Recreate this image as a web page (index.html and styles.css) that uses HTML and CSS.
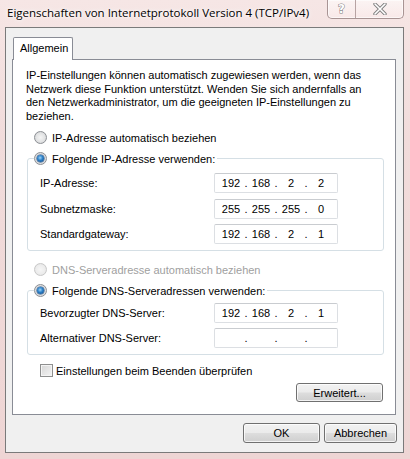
FILE: index.html
```html
<!DOCTYPE html>
<html lang="de">
<head>
<meta charset="utf-8">
<title>Eigenschaften von Internetprotokoll Version 4 (TCP/IPv4)</title>
<link rel="stylesheet" href="styles.css">
</head>
<body>
<div class="frame">
  <div class="titlebar">
    <span class="title">Eigenschaften von Internetprotokoll Version 4 (TCP/IPv4)</span>
    <div class="caption-btns">
      <span class="cbtn help">?</span>
      <span class="cbtn close"><svg width="14" height="12" viewBox="0 0 14 12"><path d="M2 1 L12 11 M12 1 L2 11" stroke="#7d7d7d" stroke-width="3.4" stroke-linecap="round"/><path d="M2 1 L12 11 M12 1 L2 11" stroke="#ffffff" stroke-width="1.6" stroke-linecap="round"/></svg></span>
    </div>
  </div>
  <div class="client">
    <div class="tabs"><div class="tab">Allgemein</div></div>
    <div class="panel">
      <p class="intro">IP-Einstellungen können automatisch zugewiesen werden, wenn das Netzwerk diese Funktion unterstützt. Wenden Sie sich andernfalls an den Netzwerkadministrator, um die geeigneten IP-Einstellungen zu beziehen.</p>

      <div class="opt opt-ip-auto"><span class="radio"></span><span>IP-Adresse automatisch beziehen</span></div>

      <div class="group group-ip">
        <div class="group-head"><span class="radio checked"></span><span>Folgende IP-Adresse verwenden:</span></div>
        <div class="field field-first"><span class="flabel">IP-Adresse:</span><span class="ipbox"><span>192</span><i>.</i><span>168</span><i>.</i><span>2</span><i>.</i><span>2</span></span></div>
        <div class="field"><span class="flabel">Subnetzmaske:</span><span class="ipbox"><span>255</span><i>.</i><span>255</span><i>.</i><span>255</span><i>.</i><span>0</span></span></div>
        <div class="field"><span class="flabel">Standardgateway:</span><span class="ipbox"><span>192</span><i>.</i><span>168</span><i>.</i><span>2</span><i>.</i><span>1</span></span></div>
      </div>

      <div class="opt opt-dns-auto disabled"><span class="radio"></span><span>DNS-Serveradresse automatisch beziehen</span></div>

      <div class="group group-dns">
        <div class="group-head"><span class="radio checked"></span><span>Folgende DNS-Serveradressen verwenden:</span></div>
        <div class="field field-first dns-first"><span class="flabel">Bevorzugter DNS-Server:</span><span class="ipbox"><span>192</span><i>.</i><span>168</span><i>.</i><span>2</span><i>.</i><span>1</span></span></div>
        <div class="field"><span class="flabel">Alternativer DNS-Server:</span><span class="ipbox"><span></span><i>.</i><span></span><i>.</i><span></span><i>.</i><span></span></span></div>
      </div>

      <div class="opt opt-check"><span class="checkbox"></span><span>Einstellungen beim Beenden überprüfen</span></div>

      <div class="adv-row"><button class="btn btn-adv">Erweitert...</button></div>
    </div>
    <div class="dlg-buttons">
      <button class="btn btn-ok">OK</button>
      <button class="btn btn-cancel">Abbrechen</button>
    </div>
  </div>
</div>
</body>
</html>
```

FILE: styles.css
```css
* { box-sizing: border-box; }
html, body { margin: 0; padding: 0; }
body {
  width: 410px;
  height: 459px;
  overflow: hidden;
  font-family: "Liberation Sans", Arial, sans-serif;
  font-size: 11px;
  color: #000;
}
.frame {
  width: 410px;
  height: 459px;
  background: linear-gradient(180deg, #f6e6e5 0%, #f1dcdb 30%, #eed5d4 100%);
  display: flex;
  flex-direction: column;
}
.titlebar {
  height: 27px;
  display: flex;
  align-items: flex-start;
  flex: none;
}
.title {
  flex: 1;
  padding: 5px 0 0 7px;
  font-family: "Open Sans", "Noto Sans", sans-serif;
  font-size: 11.5px;
  line-height: 16px;
  color: #000;
  text-shadow: 0 0 6px #fff, 0 0 3px #fff;
  white-space: nowrap;
}
.caption-btns {
  display: flex;
  margin-right: 6px;
  height: 19px;
  border: 1px solid #a89494;
  border-top: none;
  border-radius: 0 0 5px 5px;
  background: linear-gradient(180deg, rgba(255,255,255,0.55), rgba(255,240,240,0.35));
  box-shadow: inset 0 0 0 1px rgba(255,255,255,0.6);
}
.cbtn {
  display: flex;
  align-items: center;
  justify-content: center;
  height: 18px;
}
.help {
  width: 28px;
  border-right: 1px solid #b7a3a3;
  font-family: "DejaVu Sans", sans-serif;
  font-weight: bold;
  font-size: 12px;
  color: #fff;
  -webkit-text-stroke: 1px #7d7d7d;
  paint-order: stroke fill;
}
.close { width: 47px; }

.client {
  margin-left: 5px;
  width: 399px;
  height: 426px;
  background: #f0f0f0;
  border: 1px solid #7a7a7a;
  padding: 9px 0 0 6px;
  display: flex;
  flex-direction: column;
}
.tabs {
  display: flex;
  padding-left: 1px;
  height: 22px;
  flex: none;
}
.tab {
  width: 60px;
  height: 23px;
  border: 1px solid #898c95;
  border-bottom: none;
  border-radius: 2px 2px 0 0;
  background: #fff;
  padding: 3px 0 0 6px;
  line-height: 14px;
  position: relative;
  z-index: 1;
}
.panel {
  width: 384px;
  height: 356px;
  border: 1px solid #898c95;
  background: #fff;
  padding: 9px 11px 0 13px;
  display: flex;
  flex-direction: column;
  flex: none;
}
.intro {
  margin: 0;
  line-height: 13.5px;
  width: 340px;
}
.opt {
  display: flex;
  align-items: center;
  height: 17px;
  gap: 5px;
}
.opt-ip-auto { margin: 6px 0 0 8px; }
.opt-dns-auto { margin: 10px 0 0 8px; }
.opt-check { margin: 7px 0 0 14px; gap: 3px; }
.disabled { color: #a0a0a0; }

.radio {
  width: 13px;
  height: 13px;
  border-radius: 50%;
  border: 1px solid #8c8f94;
  background: radial-gradient(circle at 50% 50%, #f4f4f4 0%, #e2e3e4 55%, #c9cbcd 100%);
  flex: none;
  display: flex;
  align-items: center;
  justify-content: center;
}
.disabled .radio {
  border-color: #c8c8c8;
  background: radial-gradient(circle at 50% 50%, #f6f6f6 0%, #ececec 60%, #dcdcdc 100%);
}
.radio.checked::after {
  content: "";
  width: 7px;
  height: 7px;
  border-radius: 50%;
  background: radial-gradient(circle at 45% 40%, #9fd4f8 0%, #2a7fc7 45%, #0c3d78 100%);
  box-shadow: 0 0 0 0.5px #1d4c82;
}
.checkbox {
  width: 13px;
  height: 13px;
  border: 1px solid #8e8f8f;
  background: linear-gradient(135deg, #d6d6d6 0%, #f4f4f4 100%);
  box-shadow: inset 0 0 0 1px #f4f4f4;
  flex: none;
}

.group {
  margin: 12px 0 0 1px;
  border: 1px solid #d5dfe5;
  border-radius: 3px;
  padding: 0 0 6px 12px;
  display: flex;
  flex-direction: column;
}
.group-dns { margin-top: 12px; }
.group-head {
  display: flex;
  align-items: center;
  gap: 5px;
  height: 17px;
  margin: -9px 0 0 -6px;
  padding: 0 2px 0 0;
  background: #fff;
  align-self: flex-start;
}
.field {
  display: flex;
  align-items: center;
  margin-top: 5.5px;
}
.field-first { margin-top: 6px; }
.dns-first { margin-top: 3.5px; }
.flabel { width: 174px; }
.ipbox {
  width: 124px;
  height: 20px;
  border: 1px solid #dcdfe3;
  border-top-color: #c9ccd0;
  border-radius: 2px;
  display: flex;
  align-items: center;
  padding: 0 0 0 4px;
  background: #fff;
}
.ipbox span {
  width: 24px;
  text-align: center;
}
.ipbox i {
  font-style: normal;
  width: 6px;
  text-align: center;
}

.adv-row {
  display: flex;
  justify-content: flex-end;
  margin-top: 4px;
  padding-right: 1px;
}
.btn {
  font-family: "Liberation Sans", Arial, sans-serif;
  font-size: 11px;
  color: #000;
  height: 20px;
  border: 1px solid #707070;
  border-radius: 3px;
  background: linear-gradient(180deg, #f2f2f2 0%, #ebebeb 48%, #dddddd 52%, #cfcfcf 100%);
  box-shadow: inset 0 0 0 1px rgba(255,255,255,0.75);
  padding: 0;
  margin: 0;
}
.btn-adv { width: 87px; height: 19px; }
.dlg-buttons {
  display: flex;
  justify-content: flex-end;
  gap: 4px;
  margin-top: 8px;
  padding-right: 6px;
}
.btn-ok { width: 77px; }
.btn-cancel { width: 73px; }
```
